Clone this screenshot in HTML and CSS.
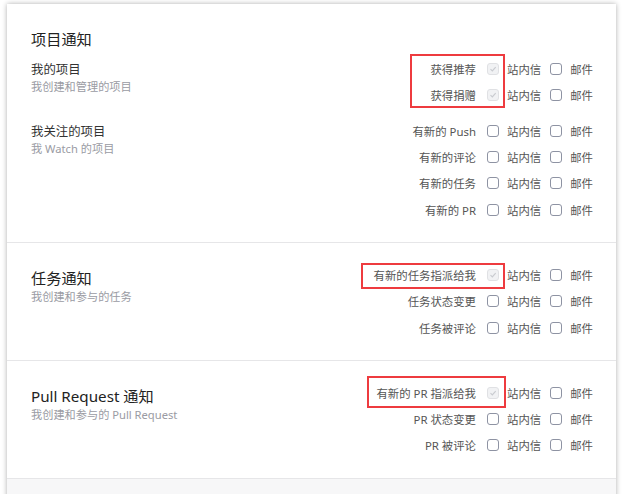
FILE: index.html
```html
<!DOCTYPE html>
<html lang="zh-CN">
<head>
<meta charset="utf-8">
<title>通知设置</title>
<link rel="stylesheet" href="styles.css">
</head>
<body>
<div class="card">
  <section class="sec sec-first">
    <h2 class="sec-title">项目通知</h2>
    <div class="group">
      <div class="group-info">
        <div class="group-name">我的项目</div>
        <div class="group-desc">我创建和管理的项目</div>
      </div>
      <div class="rows">
        <div class="row"><span class="label">获得推荐</span><span class="opt"><span class="cb cb-dis"><svg viewBox="0 0 12 12"><path d="M3 6.2 L5.2 8.3 L9.2 3.8"/></svg></span>站内信</span><span class="opt"><span class="cb"></span>邮件</span></div>
        <div class="row"><span class="label">获得捐赠</span><span class="opt"><span class="cb cb-dis"><svg viewBox="0 0 12 12"><path d="M3 6.2 L5.2 8.3 L9.2 3.8"/></svg></span>站内信</span><span class="opt"><span class="cb"></span>邮件</span></div>
        <div class="mark mark-1"></div>
      </div>
    </div>
    <div class="group group-next">
      <div class="group-info">
        <div class="group-name">我关注的项目</div>
        <div class="group-desc">我 Watch 的项目</div>
      </div>
      <div class="rows">
        <div class="row"><span class="label">有新的 Push</span><span class="opt"><span class="cb"></span>站内信</span><span class="opt"><span class="cb"></span>邮件</span></div>
        <div class="row"><span class="label">有新的评论</span><span class="opt"><span class="cb"></span>站内信</span><span class="opt"><span class="cb"></span>邮件</span></div>
        <div class="row"><span class="label">有新的任务</span><span class="opt"><span class="cb"></span>站内信</span><span class="opt"><span class="cb"></span>邮件</span></div>
        <div class="row"><span class="label">有新的 PR</span><span class="opt"><span class="cb"></span>站内信</span><span class="opt"><span class="cb"></span>邮件</span></div>
      </div>
    </div>
  </section>

  <section class="sec">
    <div class="group">
      <div class="group-info info-title">
        <h2 class="sec-title">任务通知</h2>
        <div class="group-desc">我创建和参与的任务</div>
      </div>
      <div class="rows">
        <div class="row"><span class="label">有新的任务指派给我</span><span class="opt"><span class="cb cb-dis"><svg viewBox="0 0 12 12"><path d="M3 6.2 L5.2 8.3 L9.2 3.8"/></svg></span>站内信</span><span class="opt"><span class="cb"></span>邮件</span></div>
        <div class="row"><span class="label">任务状态变更</span><span class="opt"><span class="cb"></span>站内信</span><span class="opt"><span class="cb"></span>邮件</span></div>
        <div class="row"><span class="label">任务被评论</span><span class="opt"><span class="cb"></span>站内信</span><span class="opt"><span class="cb"></span>邮件</span></div>
        <div class="mark mark-2"></div>
      </div>
    </div>
  </section>

  <section class="sec">
    <div class="group">
      <div class="group-info info-title">
        <h2 class="sec-title">Pull Request 通知</h2>
        <div class="group-desc">我创建和参与的 Pull Request</div>
      </div>
      <div class="rows">
        <div class="row"><span class="label">有新的 PR 指派给我</span><span class="opt"><span class="cb cb-dis"><svg viewBox="0 0 12 12"><path d="M3 6.2 L5.2 8.3 L9.2 3.8"/></svg></span>站内信</span><span class="opt"><span class="cb"></span>邮件</span></div>
        <div class="row"><span class="label">PR 状态变更</span><span class="opt"><span class="cb"></span>站内信</span><span class="opt"><span class="cb"></span>邮件</span></div>
        <div class="row"><span class="label">PR 被评论</span><span class="opt"><span class="cb"></span>站内信</span><span class="opt"><span class="cb"></span>邮件</span></div>
        <div class="mark mark-3"></div>
      </div>
    </div>
  </section>

  <div class="card-foot"></div>
</div>
</body>
</html>
```

FILE: styles.css
```css
html, body {
  margin: 0;
  padding: 0;
  background: #ffffff;
}

body {
  font-family: "Noto Sans", "Noto Sans CJK SC", sans-serif;
  color: #333;
  overflow: hidden;
}

.card {
  margin: 4px 0 0 7px;
  width: 609px;
  background: #fff;
  box-shadow: 0 0 5px rgba(0, 0, 0, 0.32);
}

.sec {
  padding: 19px 23px 19px 24px;
  border-bottom: 1px solid #e6e6e8;
}

.sec-first {
  padding-top: 24px;
}

.sec-title {
  margin: 0;
  font-size: 15.2px;
  line-height: 22px;
  font-weight: normal;
  color: #222;
}

.sec-first > .sec-title {
  margin-bottom: 6px;
}

.group {
  display: flex;
  justify-content: space-between;
  align-items: flex-start;
}

.group-next {
  margin-top: 9px;
}

.group-info {
  padding-top: 5px;
}

.info-title {
  padding-top: 5px;
}

.group-name {
  font-size: 12.4px;
  line-height: 18px;
  color: #333;
}

.group-desc {
  font-size: 11.2px;
  line-height: 16px;
  color: #9a9ba3;
}

.rows {
  position: relative;
  display: flex;
  flex-direction: column;
}

.row {
  height: 26.3px;
  display: flex;
  align-items: center;
  justify-content: flex-end;
  font-size: 11.4px;
  color: #555;
}

.label {
  margin-right: 11px;
}

.opt {
  display: flex;
  align-items: center;
  margin-left: 9px;
}

.label + .opt {
  margin-left: 0;
}

.cb {
  box-sizing: border-box;
  width: 12px;
  height: 12px;
  margin-right: 8px;
  border: 1px solid #8e93a3;
  border-radius: 3px;
  background: #fff;
  display: flex;
  align-items: center;
  justify-content: center;
}

.cb svg {
  width: 12px;
  height: 12px;
}

.cb svg path {
  fill: none;
  stroke: #c9cbd0;
  stroke-width: 1.4;
}

.cb-dis {
  border-color: #e0e1e4;
  background: #f1f2f4;
}

.mark {
  position: absolute;
  border: 2px solid #ee3b3f;
  box-sizing: border-box;
}

.mark-1 {
  right: 88px;
  top: -2px;
  width: 95px;
  height: 54px;
}

.mark-2 {
  right: 88px;
  top: 1px;
  width: 144px;
  height: 26px;
}

.mark-3 {
  right: 87px;
  top: -4px;
  width: 139px;
  height: 32px;
}

.card-foot {
  height: 30px;
  background: #f7f7f8;
}
```
